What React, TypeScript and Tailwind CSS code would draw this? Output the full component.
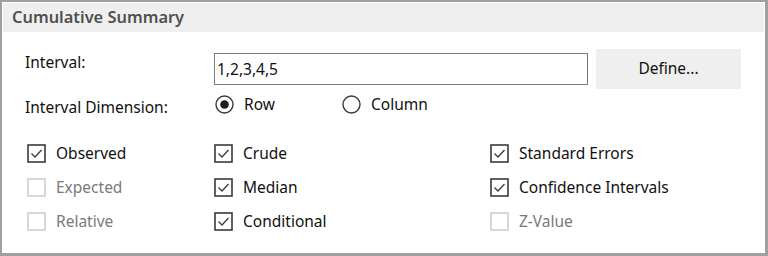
import React from "react";

const font = { fontFamily: '"Noto Sans", "Open Sans", sans-serif' };

function Check({ checked, disabled }: { checked?: boolean; disabled?: boolean }) {
  return (
    <svg width="19" height="19" viewBox="0 0 19 19" className="shrink-0">
      <rect
        x="1"
        y="1"
        width="17"
        height="17"
        fill="white"
        stroke={disabled ? "#cfcfcf" : "#3a3a3a"}
        strokeWidth="1.6"
      />
      {checked && (
        <polyline points="4.5,9.5 8,13 14.5,6" fill="none" stroke="#3a3a3a" strokeWidth="1.3" />
      )}
    </svg>
  );
}

function Radio({ checked }: { checked?: boolean }) {
  return (
    <svg width="19" height="19" viewBox="0 0 19 19" className="shrink-0">
      <circle cx="9.5" cy="9.5" r="8.5" fill="white" stroke="#3a3a3a" strokeWidth="1.4" />
      {checked && <circle cx="9.5" cy="9.5" r="4.3" fill="#1f1f1f" />}
    </svg>
  );
}

function Item({
  label,
  checked,
  disabled,
}: {
  label: string;
  checked?: boolean;
  disabled?: boolean;
}) {
  return (
    <div className="flex h-[34px] items-center gap-[10px]">
      <Check checked={checked} disabled={disabled} />
      <span className={disabled ? "text-[#7a7a7a]" : "text-[#111111]"}>{label}</span>
    </div>
  );
}

export default function App() {
  return (
    <div
      className="w-[768px] h-[256px] bg-white border-l-2 border-t-2 border-r-[3px] border-b-[3px] border-[#a0a0a0] p-px text-[15.5px] leading-[22px]"
      style={font}
    >
      <div className="h-[29px] bg-[#efefef] flex items-center pl-[9px]">
        <span className="text-[16.4px] font-semibold text-[#505050] -mt-px">Cumulative Summary</span>
      </div>
      <div className="pl-[22px] pt-[17px]">
        <div className="flex items-center h-[40px]">
          <div className="w-[189px] text-[#111111] self-start pt-[2px]">Interval:</div>
          <div className="w-[374px] h-[32px] border border-[#7a7a7a] flex items-center pl-[2px] text-[#111111]">
            1,2,3,4,5
          </div>
          <button className="ml-[8px] w-[145px] h-[40px] bg-[#efefef] text-[#111111] pb-[2px]">Define...</button>
        </div>
        <div className="flex items-center h-[29px]">
          <div className="w-[189px] text-[#111111] mt-[7px]">Interval Dimension:</div>
          <div className="flex items-center mt-px">
            <div className="w-[128px] flex items-center gap-[10px] pl-px">
              <Radio checked />
              <span className="text-[#111111]">Row</span>
            </div>
            <div className="flex items-center gap-[10px]">
              <Radio />
              <span className="text-[#111111]">Column</span>
            </div>
          </div>
        </div>
        <div className="flex mt-[18px] pl-[2px]">
          <div className="w-[187px] flex flex-col">
            <Item label="Observed" checked />
            <Item label="Expected" disabled />
            <Item label="Relative" disabled />
          </div>
          <div className="w-[276px] flex flex-col">
            <Item label="Crude" checked />
            <Item label="Median" checked />
            <Item label="Conditional" checked />
          </div>
          <div className="flex flex-col">
            <Item label="Standard Errors" checked />
            <Item label="Confidence Intervals" checked />
            <Item label="Z-Value" disabled />
          </div>
        </div>
      </div>
    </div>
  );
}
